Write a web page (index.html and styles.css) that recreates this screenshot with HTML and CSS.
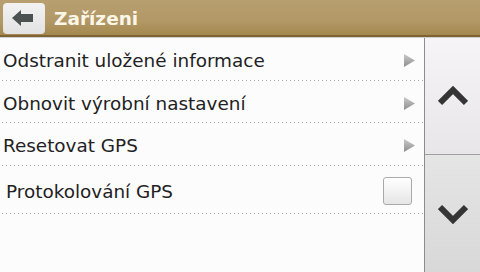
FILE: index.html
```html
<!DOCTYPE html>
<html>
<head>
<meta charset="utf-8">
<link rel="stylesheet" href="styles.css">
</head>
<body>
<div class="screen">
  <header class="header">
    <div class="back">
      <svg width="24" height="16" viewBox="0 0 24 16"><polygon points="0,8 9,0 9,4 21,4 21,12 9,12 9,16" fill="#4b5150"/></svg>
    </div>
    <div class="title">Zařízeni</div>
  </header>
  <div class="main">
    <div class="list">
      <div class="row r1"><span class="label">Odstranit uložené informace</span><svg class="tri" width="11" height="13" viewBox="0 0 11 13"><defs><linearGradient id="g1" x1="0" y1="0" x2="0" y2="1"><stop offset="0" stop-color="#c9c9c9"/><stop offset="1" stop-color="#8f8f8f"/></linearGradient></defs><polygon points="0,0 11,6.5 0,13" fill="url(#g1)"/></svg></div>
      <div class="row r2"><span class="label">Obnovit výrobní nastavení</span><svg class="tri" width="11" height="13" viewBox="0 0 11 13"><polygon points="0,0 11,6.5 0,13" fill="url(#g1)"/></svg></div>
      <div class="row r3"><span class="label">Resetovat GPS</span><svg class="tri" width="11" height="13" viewBox="0 0 11 13"><polygon points="0,0 11,6.5 0,13" fill="url(#g1)"/></svg></div>
      <div class="row r4"><span class="label indent">Protokolování GPS</span><span class="check"></span></div>
    </div>
    <div class="side">
      <div class="btn up">
        <svg width="30" height="20" viewBox="0 0 30 20"><polyline points="2,17 15,4 28,17" fill="none" stroke="#353535" stroke-width="6"/></svg>
      </div>
      <div class="btn down">
        <svg width="30" height="20" viewBox="0 0 30 20"><polyline points="2,3 15,16 28,3" fill="none" stroke="#353535" stroke-width="6"/></svg>
      </div>
    </div>
  </div>
</div>
</body>
</html>
```
FILE: styles.css
```css
html, body {
  margin: 0;
  padding: 0;
  background: #fdfcfd;
}
.screen {
  width: 480px;
  height: 272px;
  overflow: hidden;
  display: flex;
  flex-direction: column;
  font-family: "DejaVu Sans", sans-serif;
}
.header {
  height: 35px;
  flex: none;
  display: flex;
  align-items: center;
  padding-left: 3px;
  background: linear-gradient(to bottom, #b89f70 0%, #b29866 60%, #a4884f 100%);
  border-bottom: 2px solid #7e6435;
  box-shadow: 0 1px 0 #d0d0d0;
}
.back {
  width: 42px;
  height: 31px;
  margin-top: 1px;
  border-radius: 4px;
  background: linear-gradient(to bottom, #f2f2f2, #e2e2e2);
  display: flex;
  align-items: center;
  justify-content: center;
}
.title {
  margin-left: 9px;
  margin-top: 1px;
  color: #fbf6e6;
  font-weight: bold;
  font-size: 18.5px;
}
.main {
  flex: 1;
  display: flex;
  margin-top: 1px;
}
.list {
  width: 424px;
}
.row {
  display: flex;
  align-items: center;
  justify-content: space-between;
  padding-left: 3px;
  padding-right: 9px;
  padding-top: 2px;
  box-sizing: border-box;
  font-size: 18.4px;
  color: #222;
  background-image: linear-gradient(to right, #a8a8a8 1px, transparent 1px);
  background-size: 4px 1px;
  background-repeat: repeat-x;
  background-position: 2px bottom;
  background-origin: border-box;
}
.r1 { height: 43px; }
.r2 { height: 42px; }
.r3 { height: 43px; }
.r4 { height: 48px; padding-right: 12px; }
.indent { margin-left: 3px; }
.tri { display: block; }
.check {
  width: 27px;
  height: 26px;
  border: 1px solid #aaaaaa;
  border-radius: 3px;
  background: linear-gradient(to bottom, #ffffff, #e6e6e6);
}
.side {
  width: 55px;
  border-left: 1px solid #8c8c8c;
  display: flex;
  flex-direction: column;
}
.btn {
  display: flex;
  align-items: center;
  justify-content: center;
}
.up {
  height: 116px;
  background: linear-gradient(to bottom, #f6f4f7, #e8e6e9);
  border-bottom: 1px solid #a0a0a0;
}
.down {
  flex: 1;
  background: linear-gradient(to bottom, #e6e5e6, #d8d8d8);
}
```
